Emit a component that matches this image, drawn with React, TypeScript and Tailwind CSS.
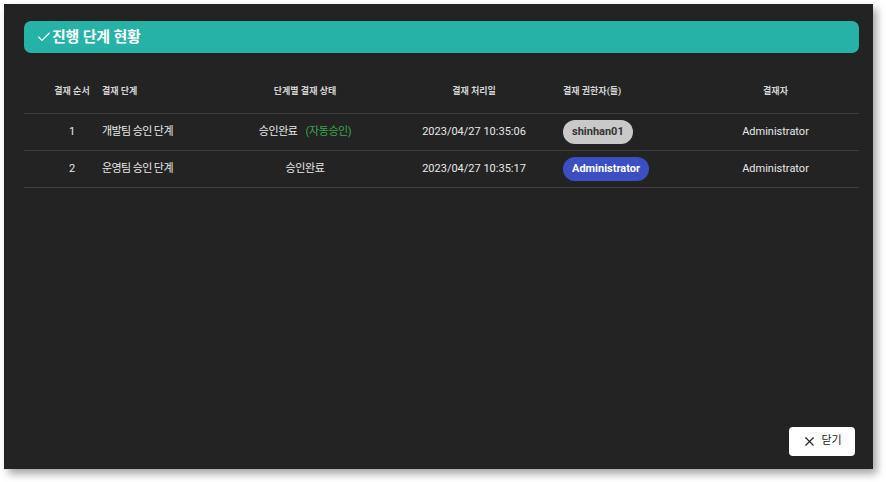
import { Check, X } from 'lucide-react';

const rows = [
    {
        no: 1,
        step: '개발팀 승인 단계',
        status: '승인완료',
        auto: true,
        date: '2023/04/27 10:35:06',
        approver: 'shinhan01',
        active: false,
        signer: 'Administrator',
    },
    {
        no: 2,
        step: '운영팀 승인 단계',
        status: '승인완료',
        auto: false,
        date: '2023/04/27 10:35:17',
        approver: 'Administrator',
        active: true,
        signer: 'Administrator',
    },
];

const cols = 'grid grid-cols-[78px_128px_150px_178px_134px_167px] items-center';

export default function App() {
    return (
        <div className="w-[886px] h-[482px] bg-white pt-[4px] pl-[4px] font-['Roboto','Noto_Sans_CJK_KR',sans-serif]">
            <div className="w-[869px] h-[465px] bg-[#232323] shadow-[4px_5px_8px_rgba(0,0,0,0.35)] flex flex-col pl-[20px] pr-[14px] pt-[17px] pb-[13px]">
                <div className="h-[32px] rounded-[7px] bg-[#27b2a8] flex items-center pl-[12px] text-white">
                    <Check className="w-[16px] h-[16px]" strokeWidth={1.7} />
                    <span className="text-[15px] font-bold tracking-[-0.2px]">진행 단계 현황</span>
                </div>

                <div className={`${cols} h-[46px] mt-[15px] border-b border-[#3d3d3d] text-[9px] font-bold text-[#d4d4d4] pt-[2px]`}>
                    <div className="text-center pl-[18px]">결재 순서</div>
                    <div>결재 단계</div>
                    <div className="text-center">단계별 결재 상태</div>
                    <div className="text-center pl-[10px]">결재 처리일</div>
                    <div className="pl-[5px]">결재 권한자(들)</div>
                    <div className="text-center">결재자</div>
                </div>

                {rows.map((r) => (
                    <div
                        key={r.no}
                        className={`${cols} h-[37px] border-b border-[#3d3d3d] text-[11px] text-[#e8e8e8]`}
                    >
                        <div className="text-center pl-[18px]">{r.no}</div>
                        <div className="tracking-[-0.6px]">{r.step}</div>
                        <div className="text-center tracking-[-0.4px]">
                            {r.status}
                            {r.auto && <span className="ml-[8px] text-[#3fa34d]">(자동승인)</span>}
                        </div>
                        <div className="text-center pl-[10px]">{r.date}</div>
                        <div className="pl-[5px]">
                            <span
                                className={`inline-flex items-center h-[24px] px-[9px] rounded-full text-[11px] font-bold ${
                                    r.active ? 'bg-[#3b4fc2] text-white' : 'bg-[#c9c9c9] text-[#333]'
                                }`}
                            >
                                {r.approver}
                            </span>
                        </div>
                        <div className="text-center">{r.signer}</div>
                    </div>
                ))}

                <div className="mt-auto flex justify-end pr-[4px]">
                    <button className="w-[66px] h-[29px] bg-white rounded-[4px] flex items-center justify-center gap-[4px] text-[11px] text-[#222]">
                        <X className="w-[15px] h-[15px]" strokeWidth={1.7} />
                        <span>닫기</span>
                    </button>
                </div>
            </div>
        </div>
    );
}
